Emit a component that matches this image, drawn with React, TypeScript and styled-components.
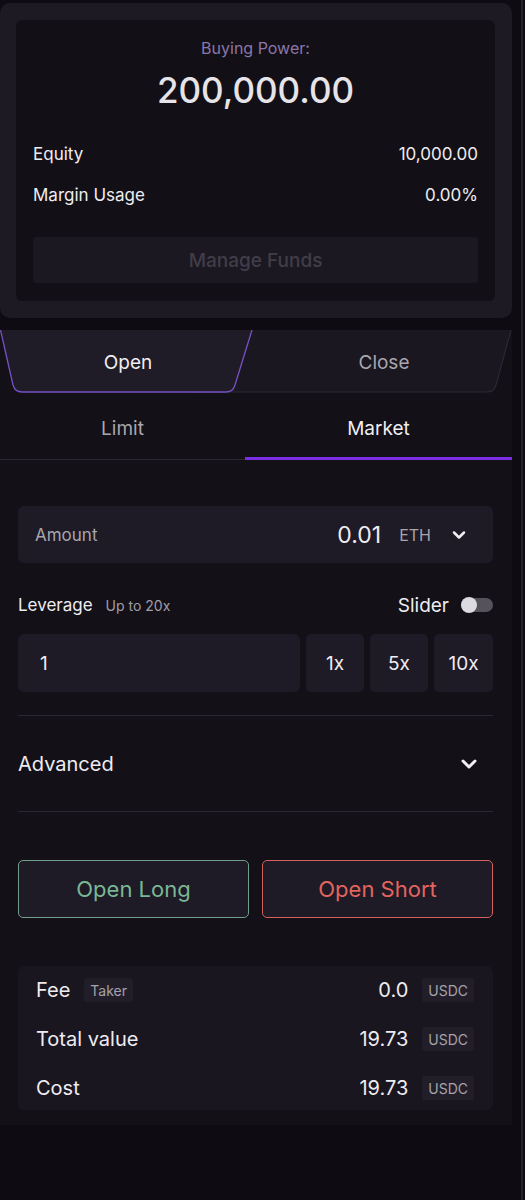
import React, { useState } from 'react'
import styled, { createGlobalStyle } from 'styled-components'
import { ChevronDown } from 'lucide-react'

const GlobalStyle = createGlobalStyle`
  html, body {
    margin: 0;
    padding: 0;
    background: #0e0c12;
  }
  * {
    box-sizing: border-box;
  }
  body {
    font-family: Inter, 'Noto Sans', sans-serif;
    color: #e9e7ec;
    -webkit-font-smoothing: antialiased;
  }
`

const Page = styled.div`
  display: flex;
  width: 525px;
  min-height: 1200px;
  background: #0e0c12;
`

const Main = styled.div`
  width: 512px;
  padding-top: 3px;
  display: flex;
  flex-direction: column;
`

const Gutter = styled.div`
  width: 13px;
  display: flex;
  justify-content: flex-end;
  padding-right: 2px;

  &::after {
    content: '';
    width: 2px;
    background: #25232b;
  }
`

/* account summary */

const AccountCard = styled.div`
  background: #1d1a24;
  border-radius: 10px;
  padding: 17px 17px 17px 16px;
`

const AccountInner = styled.div`
  background: #121016;
  border-radius: 6px;
  padding: 18px 17px 18px 17px;
  display: flex;
  flex-direction: column;
`

const PowerLabel = styled.div`
  text-align: center;
  font-size: 16px;
  line-height: 20px;
  color: #8c76a9;
`

const PowerValue = styled.div`
  margin-top: 12px;
  text-align: center;
  font-size: 35px;
  line-height: 40px;
  font-weight: 500;
  color: #e6e4e8;
`

const StatRow = styled.div<{ gap?: number }>`
  display: flex;
  justify-content: space-between;
  align-items: center;
  margin-top: ${(p) => p.gap ?? 0}px;
  font-size: 17px;
  line-height: 24px;
  color: #eeecf0;
`

const ManageButton = styled.button`
  margin-top: 30px;
  height: 46px;
  border: none;
  border-radius: 4px;
  background: #1b1821;
  color: #413d49;
  font-family: inherit;
  font-size: 19px;
  font-weight: 500;
`

/* trade panel */

const TradePanel = styled.div`
  margin-top: 12px;
  background: #131017;
  display: flex;
  flex-direction: column;
`

const PositionTabs = styled.div`
  display: grid;
  grid-template-columns: 1fr 1fr;
  height: 63px;
`

const PositionTab = styled.button<{ active: boolean }>`
  position: relative;
  z-index: ${(p) => (p.active ? 2 : 1)};
  border: none;
  background: transparent;
  padding: 2px 0 0;
  font-family: inherit;
  font-size: 19px;
  font-weight: 400;
  color: ${(p) => (p.active ? '#f0eef2' : '#a9a6ae')};

  span {
    position: relative;
    z-index: 1;
  }

  svg {
    position: absolute;
    top: 0;
    height: 63px;
  }
`

const OrderTabs = styled.div`
  display: grid;
  grid-template-columns: 245px 1fr;
  height: 67px;
  border-bottom: 1px solid #2a2730;
`

const OrderTab = styled.button<{ active: boolean }>`
  border: none;
  background: transparent;
  font-family: inherit;
  font-size: 19px;
  font-weight: 400;
  padding: 7px 0 0;
  margin-bottom: -1px;
  color: ${(p) => (p.active ? '#f0eef2' : '#a9a6ae')};
  border-bottom: 3px solid ${(p) => (p.active ? '#7a2fe3' : 'transparent')};
`

const Form = styled.div`
  padding: 46px 19px 15px 18px;
  display: flex;
  flex-direction: column;
`

const AmountBox = styled.div`
  height: 57px;
  border-radius: 6px;
  background: #1e1a26;
  display: flex;
  align-items: center;
  padding: 0 24px 0 17px;
  gap: 12px;
`

const FieldLabel = styled.span`
  flex: 1;
  font-size: 17px;
  color: #a8a5ad;
`

const AmountValue = styled.span`
  font-size: 23px;
  color: #efedf1;
  margin-right: 6px;
`

const Unit = styled.span`
  font-size: 16px;
  color: #a8a5ad;
  margin-right: 6px;
`

const LeverageHead = styled.div`
  margin-top: 27px;
  height: 30px;
  display: flex;
  align-items: center;
`

const LeverageTitle = styled.span`
  font-size: 17px;
  color: #eeecf0;
`

const LeverageHint = styled.span`
  margin-left: 13px;
  font-size: 14px;
  color: #a09da6;
  flex: 1;
`

const SliderLabel = styled.span`
  font-size: 19px;
  color: #eeecf0;
  margin-right: 12px;
`

const Toggle = styled.div<{ on: boolean }>`
  position: relative;
  width: 32px;
  height: 14px;
  border-radius: 7px;
  background: #55525b;

  &::after {
    content: '';
    position: absolute;
    top: -1px;
    left: ${(p) => (p.on ? 16 : 0)}px;
    width: 16px;
    height: 16px;
    border-radius: 50%;
    background: #dcdbe0;
  }
`

const LeverageRow = styled.div`
  margin-top: 14px;
  display: grid;
  grid-template-columns: 1fr 58px 58px 59px;
  gap: 6px;
  height: 58px;
`

const LeverageInput = styled.div`
  border-radius: 6px;
  background: #1e1a26;
  display: flex;
  align-items: center;
  padding: 0 22px;
  font-size: 19px;
  color: #efedf1;
`

const PresetButton = styled.button`
  border: none;
  border-radius: 5px;
  background: #1e1a26;
  color: #efedf1;
  font-family: inherit;
  font-size: 19px;
`

const Divider = styled.div<{ top: number }>`
  margin-top: ${(p) => p.top}px;
  height: 1px;
  background: #2a2730;
`

const AdvancedRow = styled.div`
  height: 95px;
  display: flex;
  align-items: center;
  justify-content: space-between;
  padding-right: 12px;
  font-size: 20px;
  color: #eeecf0;
`

const ActionRow = styled.div`
  margin-top: 48px;
  display: grid;
  grid-template-columns: 1fr 1fr;
  gap: 13px;
`

const ActionButton = styled.button<{ tone: 'long' | 'short' }>`
  height: 58px;
  border-radius: 5px;
  background: #1e1a26;
  font-family: inherit;
  font-size: 22px;
  border: 1px solid ${(p) => (p.tone === 'long' ? '#6f9f8a' : '#d2605d')};
  color: ${(p) => (p.tone === 'long' ? '#79b795' : '#e2655f')};
`

const Summary = styled.div`
  margin-top: 48px;
  border-radius: 6px;
  background: #1a1620;
  padding: 12px 19px 10px 18px;
  display: flex;
  flex-direction: column;
  gap: 25px;
`

const SummaryRow = styled.div`
  display: flex;
  align-items: center;
  height: 24px;
  font-size: 20px;
  color: #eeecf0;
`

const SummaryLabel = styled.span`
  flex: 1;
  display: flex;
  align-items: center;
  gap: 14px;
`

const Tag = styled.span`
  display: inline-flex;
  align-items: center;
  height: 24px;
  padding: 0 6px;
  border-radius: 3px;
  background: #221e29;
  font-size: 14px;
  color: #a5a2aa;
`

const SummaryValue = styled.span`
  margin-right: 14px;
`

const TabShape: React.FC<{ active: boolean }> = ({ active }) =>
  active ? (
    <svg width="256" viewBox="0 0 256 63" style={{ left: 0 }}>
      <path
        d="M0.5 0 L13 55 Q15 62 22 62 L226 62 Q233 62 235 55 L252 0 Z"
        fill="#1f1b27"
      />
      <path
        d="M0.5 0 L13 55 Q15 62 22 62 L226 62 Q233 62 235 55 L252 0"
        fill="none"
        stroke="#7552c4"
        strokeWidth="1.3"
      />
    </svg>
  ) : (
    <svg width="320" viewBox="0 0 320 63" style={{ left: -64 }}>
      <path
        d="M0 0 L0 62 L295 62 Q302 62 304 55 L319 0 Z"
        fill="#1a1720"
      />
      <path
        d="M0 62 L295 62 Q302 62 304 55 L319 0"
        fill="none"
        stroke="#2c2834"
        strokeWidth="1.2"
      />
    </svg>
  )

const rows = [
  { label: 'Fee', tag: 'Taker', value: '0.0' },
  { label: 'Total value', value: '19.73' },
  { label: 'Cost', value: '19.73' },
]

const App: React.FC = () => {
  const [side, setSide] = useState<'open' | 'close'>('open')
  const [orderType, setOrderType] = useState<'limit' | 'market'>('market')
  const [slider, setSlider] = useState(false)

  return (
    <Page>
      <GlobalStyle />
      <Main>
        <AccountCard>
          <AccountInner>
            <PowerLabel>Buying Power:</PowerLabel>
            <PowerValue>200,000.00</PowerValue>
            <StatRow gap={32}>
              <span>Equity</span>
              <span>10,000.00</span>
            </StatRow>
            <StatRow gap={17}>
              <span>Margin Usage</span>
              <span>0.00%</span>
            </StatRow>
            <ManageButton disabled>Manage Funds</ManageButton>
          </AccountInner>
        </AccountCard>

        <TradePanel>
          <PositionTabs>
            <PositionTab active={side === 'open'} onClick={() => setSide('open')}>
              <TabShape active={side === 'open'} />
              <span>Open</span>
            </PositionTab>
            <PositionTab active={side === 'close'} onClick={() => setSide('close')}>
              <TabShape active={side === 'close'} />
              <span>Close</span>
            </PositionTab>
          </PositionTabs>

          <OrderTabs>
            <OrderTab active={orderType === 'limit'} onClick={() => setOrderType('limit')}>
              Limit
            </OrderTab>
            <OrderTab active={orderType === 'market'} onClick={() => setOrderType('market')}>
              Market
            </OrderTab>
          </OrderTabs>

          <Form>
            <AmountBox>
              <FieldLabel>Amount</FieldLabel>
              <AmountValue>0.01</AmountValue>
              <Unit>ETH</Unit>
              <ChevronDown size={20} strokeWidth={3} color="#f0eef2" />
            </AmountBox>

            <LeverageHead>
              <LeverageTitle>Leverage</LeverageTitle>
              <LeverageHint>Up to 20x</LeverageHint>
              <SliderLabel>Slider</SliderLabel>
              <Toggle on={slider} onClick={() => setSlider((s) => !s)} />
            </LeverageHead>

            <LeverageRow>
              <LeverageInput>1</LeverageInput>
              <PresetButton>1x</PresetButton>
              <PresetButton>5x</PresetButton>
              <PresetButton>10x</PresetButton>
            </LeverageRow>

            <Divider top={23} />
            <AdvancedRow>
              <span>Advanced</span>
              <ChevronDown size={24} strokeWidth={3} color="#f0eef2" />
            </AdvancedRow>
            <Divider top={0} />

            <ActionRow>
              <ActionButton tone="long">Open Long</ActionButton>
              <ActionButton tone="short">Open Short</ActionButton>
            </ActionRow>

            <Summary>
              {rows.map((r) => (
                <SummaryRow key={r.label}>
                  <SummaryLabel>
                    {r.label}
                    {r.tag && <Tag>{r.tag}</Tag>}
                  </SummaryLabel>
                  <SummaryValue>{r.value}</SummaryValue>
                  <Tag>USDC</Tag>
                </SummaryRow>
              ))}
            </Summary>
          </Form>
        </TradePanel>
      </Main>
      <Gutter />
    </Page>
  )
}

export default App
